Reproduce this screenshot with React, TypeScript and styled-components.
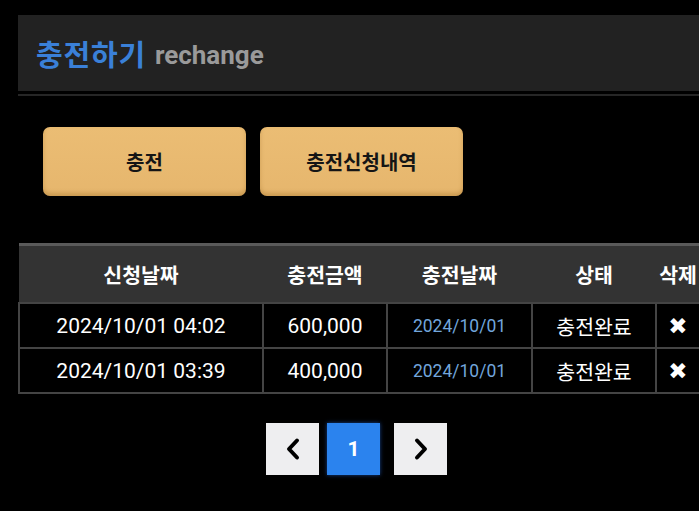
import React from "react";
import styled, { createGlobalStyle } from "styled-components";

const GlobalStyle = createGlobalStyle`
  html, body {
    margin: 0;
    padding: 0;
    background: #000;
    overflow: hidden;
  }
  body {
    font-family: Roboto, "Noto Sans CJK KR", sans-serif;
    color: #fff;
  }
`;

const Page = styled.div`
  width: 683px;
  padding: 15px 0 40px 18px;
`;

const Header = styled.div`
  height: 76px;
  background: #222;
  display: flex;
  align-items: center;
  padding-left: 18px;
  gap: 9px;
`;

const Title = styled.h1`
  margin: 0;
  font-size: 29px;
  font-weight: 700;
  color: #3a80d8;
  font-family: "Noto Sans CJK KR", sans-serif;
  letter-spacing: 0.8px;
`;

const SubTitle = styled.span`
  font-size: 26px;
  font-weight: 700;
  color: #9a9a9a;
  font-family: Roboto, sans-serif;
  padding-top: 3px;
`;

const Rule = styled.div`
  margin-top: 3px;
  height: 2px;
  background: #262626;
`;

const ButtonRow = styled.div`
  display: flex;
  gap: 14px;
  padding: 31px 0 0 25px;
`;

const ActionButton = styled.button`
  width: 203px;
  height: 69px;
  border: none;
  border-radius: 7px;
  background: linear-gradient(180deg, #ebbd74 0%, #e6b66d 100%);
  box-shadow: inset 0 -3px 4px rgba(150, 100, 30, 0.35), 0 1px 2px rgba(0, 0, 0, 0.5);
  font-family: "Noto Sans CJK KR", sans-serif;
  font-size: 20px;
  font-weight: 700;
  color: #151515;
  cursor: pointer;
`;

const Table = styled.table`
  margin-top: 47px;
  width: 683px;
  table-layout: fixed;
  border-collapse: collapse;
`;

const HeadCell = styled.th`
  height: 56px;
  background: #333;
  border-top: 3px solid #5a5a5a;
  border-bottom: 2px solid #444;
  font-family: "Noto Sans CJK KR", sans-serif;
  font-size: 20.5px;
  font-weight: 700;
  color: #fff;
  text-align: center;
  padding: 0;
`;

type Tone = "plain" | "date" | "status";

const Cell = styled.td<{ $tone?: Tone }>`
  height: 43px;
  border: 2px solid #444;
  text-align: center;
  padding: 0;
  font-family: ${(p) =>
    p.$tone === "status" ? '"Noto Sans CJK KR", sans-serif' : 'Roboto, "Noto Sans CJK KR", sans-serif'};
  font-size: ${(p) => (p.$tone === "date" ? "17.5px" : p.$tone === "status" ? "20.5px" : "21px")};
  color: ${(p) => (p.$tone === "date" ? "#72a6dc" : "#fff")};
`;

const DeleteMark = styled.span`
  font-family: "DejaVu Sans", sans-serif;
  font-size: 23px;
  color: #fff;
`;

const Pager = styled.div`
  display: flex;
  justify-content: center;
  margin-top: 29px;
  padding-right: 6px;
`;

const PageButton = styled.button<{ $active?: boolean }>`
  width: 53px;
  height: 52px;
  border: none;
  margin: ${(p) => (p.$active ? "0 14px 0 8px" : "0")};
  background: ${(p) => (p.$active ? "#2b83ee" : "#eeeef0")};
  box-shadow: ${(p) => (p.$active ? "0 0 4px rgba(40, 110, 230, 0.6)" : "none")};
  color: #fff;
  font-family: Roboto, sans-serif;
  font-size: 21px;
  font-weight: 700;
  display: flex;
  align-items: center;
  justify-content: center;
  padding: 0;
`;

const Chevron: React.FC<{ dir: "left" | "right" }> = ({ dir }) => (
  <svg width="16" height="24" viewBox="0 0 16 24">
    <path
      d={dir === "left" ? "M12 3.5 L4 12 L12 20.5" : "M4 3.5 L12 12 L4 20.5"}
      fill="none"
      stroke="#000"
      strokeWidth="4"
      strokeLinecap="round"
      strokeLinejoin="round"
    />
  </svg>
);

const rows = [
  { requested: "2024/10/01 04:02", amount: "600,000", charged: "2024/10/01", status: "충전완료" },
  { requested: "2024/10/01 03:39", amount: "400,000", charged: "2024/10/01", status: "충전완료" },
];

const App: React.FC = () => (
  <>
    <GlobalStyle />
    <Page>
      <Header>
        <Title>충전하기</Title>
        <SubTitle>rechange</SubTitle>
      </Header>
      <Rule />

      <ButtonRow>
        <ActionButton>충전</ActionButton>
        <ActionButton>충전신청내역</ActionButton>
      </ButtonRow>

      <Table>
        <colgroup>
          <col style={{ width: 244 }} />
          <col style={{ width: 124 }} />
          <col style={{ width: 145 }} />
          <col style={{ width: 124 }} />
          <col />
        </colgroup>
        <thead>
          <tr>
            <HeadCell>신청날짜</HeadCell>
            <HeadCell>충전금액</HeadCell>
            <HeadCell>충전날짜</HeadCell>
            <HeadCell>상태</HeadCell>
            <HeadCell>삭제</HeadCell>
          </tr>
        </thead>
        <tbody>
          {rows.map((r) => (
            <tr key={r.requested}>
              <Cell>{r.requested}</Cell>
              <Cell>{r.amount}</Cell>
              <Cell $tone="date">{r.charged}</Cell>
              <Cell $tone="status">{r.status}</Cell>
              <Cell>
                <DeleteMark>✖</DeleteMark>
              </Cell>
            </tr>
          ))}
        </tbody>
      </Table>

      <Pager>
        <PageButton>
          <Chevron dir="left" />
        </PageButton>
        <PageButton $active>1</PageButton>
        <PageButton>
          <Chevron dir="right" />
        </PageButton>
      </Pager>
    </Page>
  </>
);

export default App;
